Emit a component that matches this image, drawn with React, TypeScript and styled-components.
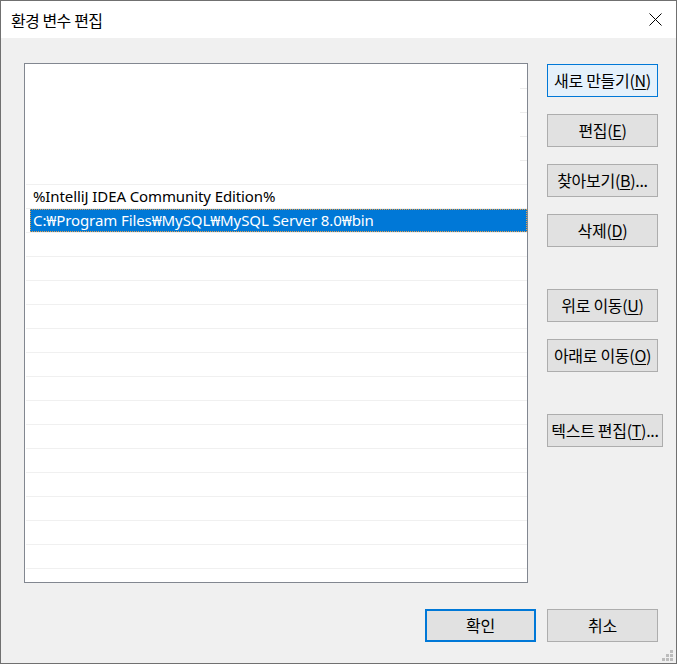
import React from "react";
import styled, { createGlobalStyle } from "styled-components";

const Global = createGlobalStyle`
  html, body { margin: 0; padding: 0; background: #f0f0f0; }
  body { font-family: "Noto Sans", "Noto Sans CJK KR", sans-serif; }
  * { box-sizing: border-box; }
`;

const Window = styled.div`
  position: relative;
  width: 677px;
  height: 664px;
  border: 1px solid #707070;
  background: #f0f0f0;
  display: flex;
  flex-direction: column;
  overflow: hidden;
`;

const TitleBar = styled.div`
  height: 37px;
  background: #ffffff;
  display: flex;
  align-items: center;
  justify-content: space-between;
  padding: 0 14px 0 10px;
  flex-shrink: 0;
`;

const Title = styled.div`
  font-family: "Noto Sans CJK KR", sans-serif;
  font-size: 16px;
  color: #000;
  letter-spacing: -0.8px;
  word-spacing: 1px;
  padding-top: 1px;
`;

const CloseIcon = styled.svg`
  width: 13px;
  height: 13px;
  display: block;
`;

const Body = styled.div`
  display: flex;
  align-items: flex-start;
  padding: 25px 0 0 23px;
`;

const ListBox = styled.div`
  width: 504px;
  height: 520px;
  border: 1px solid #828790;
  background: #fff;
  padding: 1px 0 0 1px;
  overflow: hidden;
  flex-shrink: 0;
`;

const Row = styled.div<{ $faded?: boolean }>`
  position: relative;
  width: 501px;
  height: 24px;
  border-bottom: 1px solid ${(p) => (p.$faded ? "transparent" : "#f0f0f0")};
  display: flex;
  align-items: stretch;
  &::after {
    content: "";
    display: ${(p) => (p.$faded ? "block" : "none")};
    position: absolute;
    right: 0;
    bottom: -1px;
    width: 7px;
    height: 1px;
    background: #ececec;
  }
`;

const RowText = styled.div<{ $selected?: boolean }>`
  flex: 1;
  margin-left: ${(p) => (p.$selected ? "4px" : "0")};
  padding-left: ${(p) => (p.$selected ? "3px" : "7px")};
  background: ${(p) => (p.$selected ? "#0078d7" : "transparent")};
  color: ${(p) => (p.$selected ? "#fff" : "#000")};
  outline: ${(p) => (p.$selected ? "1px dotted #e8a04a" : "none")};
  outline-offset: -1px;
  font-family: "Noto Sans", "Noto Sans CJK KR", sans-serif;
  font-size: 15px;
  letter-spacing: -0.1px;
  line-height: 23px;
  white-space: nowrap;
  overflow: hidden;
`;

const SideColumn = styled.div`
  display: flex;
  flex-direction: column;
  gap: 42px;
  margin: 1px 0 0 19px;
`;

const ButtonGroup = styled.div`
  display: flex;
  flex-direction: column;
  gap: 17px;
`;

const Button = styled.button<{ $variant?: "default" | "hover" | "focus"; $width?: number }>`
  width: ${(p) => p.$width ?? 111}px;
  height: 33px;
  padding: 0 0 1px;
  margin: 0;
  background: ${(p) => (p.$variant === "hover" ? "#e5f1fb" : "#e1e1e1")};
  border: ${(p) =>
    p.$variant === "hover"
      ? "1px solid #0078d7"
      : p.$variant === "focus"
      ? "2px solid #0078d7"
      : "1px solid #adadad"};
  font-family: "Noto Sans CJK KR", sans-serif;
  font-size: 16px;
  letter-spacing: -0.3px;
  color: #000;
  white-space: nowrap;
  display: flex;
  align-items: center;
  justify-content: center;
  u { text-underline-offset: 2px; }
`;

const Footer = styled.div`
  display: flex;
  justify-content: flex-end;
  gap: 11px;
  padding: 26px 18px 0 0;
`;

const Grip = styled.svg`
  position: absolute;
  right: 2px;
  bottom: 1px;
  width: 12px;
  height: 12px;
`;

const selectedIndex = 6;
const rows: (string | null)[] = Array.from({ length: 22 }, (_, i) => {
  if (i === 5) return "%IntelliJ IDEA Community Edition%";
  if (i === 6) return "C:₩Program Files₩MySQL₩MySQL Server 8.0₩bin";
  return null;
});

export default function App() {
  return (
    <>
      <Global />
      <Window>
        <TitleBar>
          <Title>환경 변수 편집</Title>
          <CloseIcon viewBox="0 0 13 13">
            <path d="M0.5 0.5 L12.5 12.5 M12.5 0.5 L0.5 12.5" stroke="#000" strokeWidth="1" fill="none" />
          </CloseIcon>
        </TitleBar>
        <Body>
          <ListBox>
            {rows.map((text, i) => (
              <Row key={i} $faded={i < 4}>
                <RowText $selected={i === selectedIndex}>{text ?? ""}</RowText>
              </Row>
            ))}
          </ListBox>
          <SideColumn>
            <ButtonGroup>
              <Button $variant="hover">새로 만들기(<u>N</u>)</Button>
              <Button>편집(<u>E</u>)</Button>
              <Button>찾아보기(<u>B</u>)...</Button>
              <Button>삭제(<u>D</u>)</Button>
            </ButtonGroup>
            <ButtonGroup>
              <Button>위로 이동(<u>U</u>)</Button>
              <Button>아래로 이동(<u>O</u>)</Button>
            </ButtonGroup>
            <ButtonGroup>
              <Button $width={116}>텍스트 편집(<u>T</u>)...</Button>
            </ButtonGroup>
          </SideColumn>
        </Body>
        <Footer>
          <Button $variant="focus">확인</Button>
          <Button>취소</Button>
        </Footer>
        <Grip viewBox="0 0 12 12">
          {[
            [8, 0],
            [4, 4],
            [8, 4],
            [0, 8],
            [4, 8],
            [8, 8],
          ].map(([x, y], i) => (
            <rect key={i} x={x} y={y} width="3" height="3" fill="#bcbcbc" />
          ))}
        </Grip>
      </Window>
    </>
  );
}
